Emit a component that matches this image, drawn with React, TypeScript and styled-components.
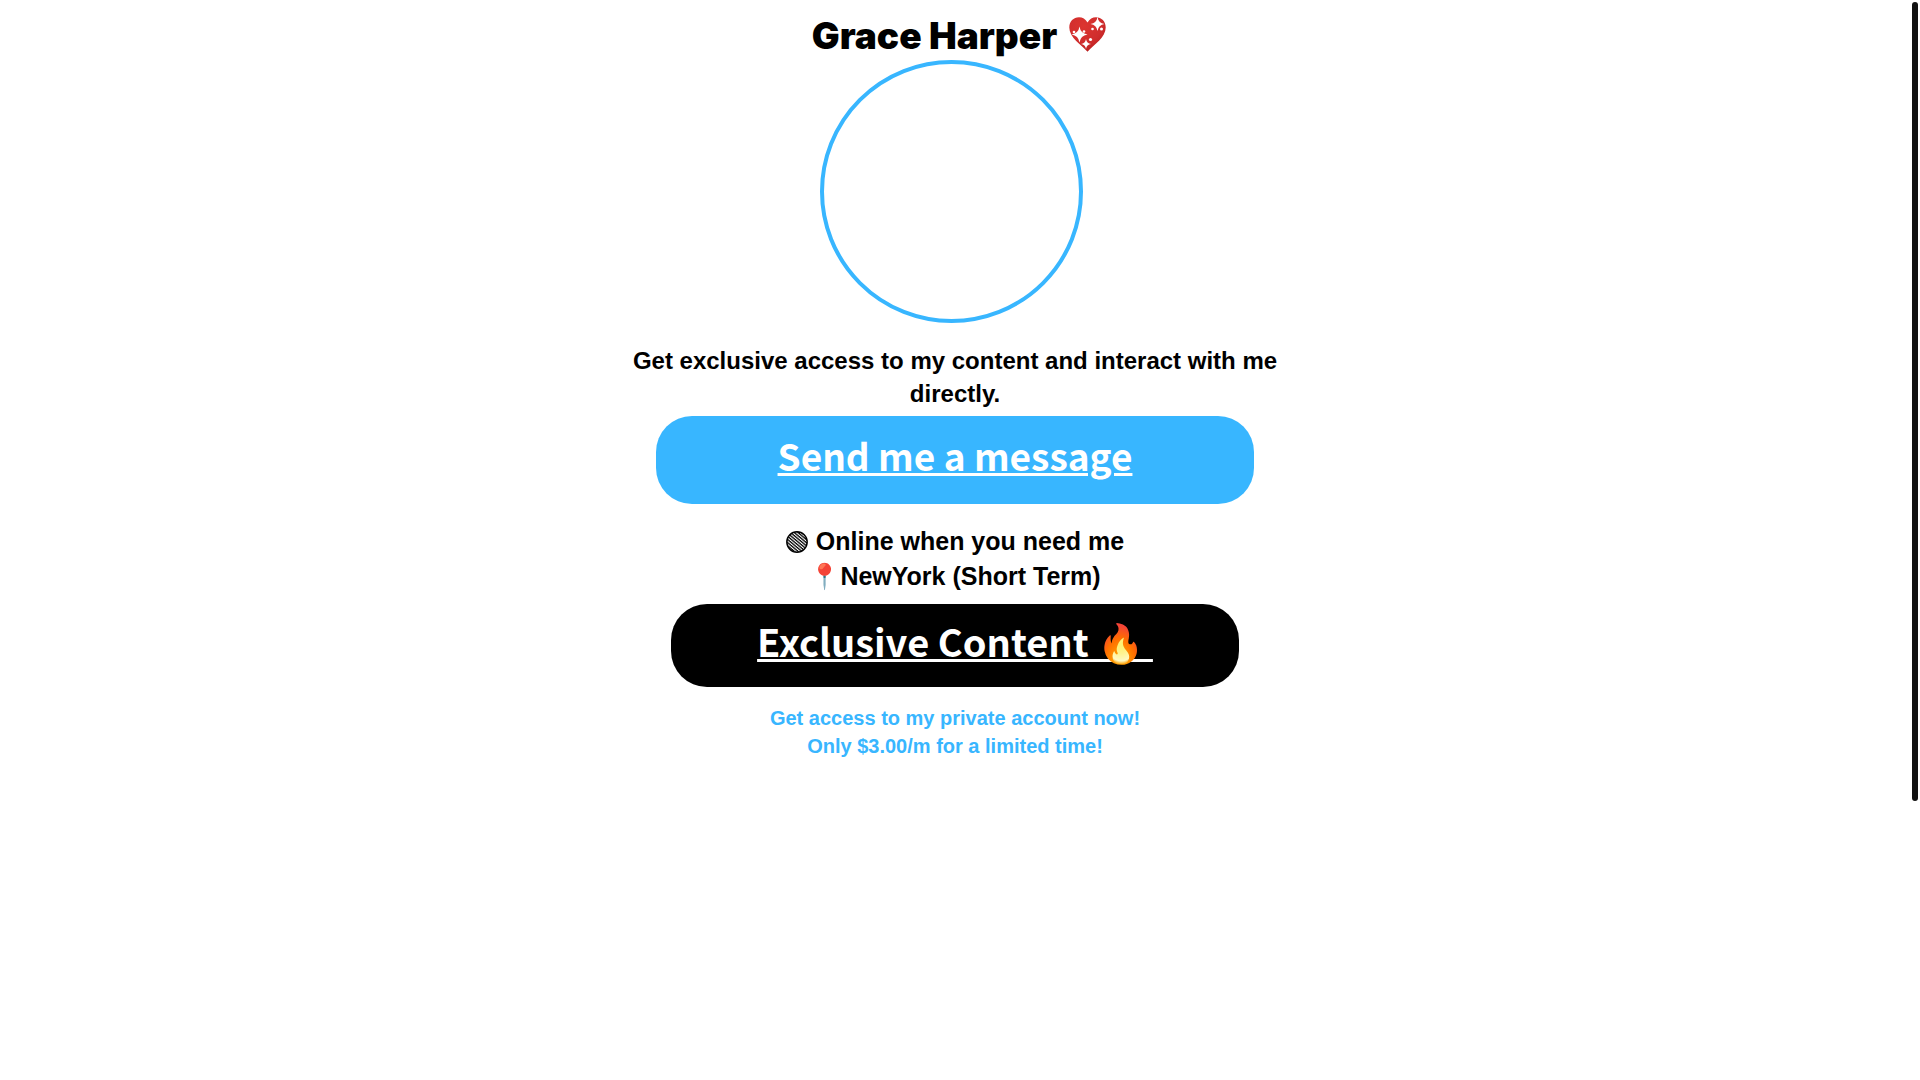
import React from "react";
import styled, { createGlobalStyle } from "styled-components";

const blue = "#38b6ff";

const GlobalStyle = createGlobalStyle`
  body {
    margin: 0;
    background: #fff;
    color: #000;
    font-family: "Liberation Sans", Arial, sans-serif;
  }
`;

const Page = styled.div`
  display: flex;
  align-items: flex-start;
  min-height: 100vh;
`;

const Profile = styled.main`
  flex: 1;
  display: flex;
  flex-direction: column;
  align-items: center;
  padding: 12px 0 40px;
`;

const Name = styled.h1`
  display: flex;
  align-items: center;
  gap: 12px;
  height: 48px;
  margin: 0;
  padding-left: 8px;
  font: 900 37px/48px Inter, "Liberation Sans", sans-serif;

  svg {
    margin-bottom: 4px;
  }
`;

const Avatar = styled.div`
  box-sizing: border-box;
  width: 263px;
  height: 263px;
  margin: 0 8px 21px 0;
  border: 4px solid ${blue};
  border-radius: 50%;
`;

const Text = styled.p<{ $size: number; $line: number; $color?: string }>`
  max-width: 670px;
  margin: 0;
  color: ${(p) => p.$color ?? "inherit"};
  font-weight: 700;
  font-size: ${(p) => p.$size}px;
  line-height: ${(p) => p.$line}px;
  text-align: center;
`;

const StatusLine = styled.span`
  display: flex;
  align-items: center;
  justify-content: center;
  gap: 8px;
`;

const Action = styled.a<{ $bg: string; $width: number; $height: number; $size: number }>`
  box-sizing: border-box;
  display: flex;
  align-items: center;
  justify-content: center;
  width: ${(p) => p.$width}px;
  max-width: 100%;
  height: ${(p) => p.$height}px;
  padding-bottom: 10px;
  border-radius: 36px;
  background: ${(p) => p.$bg};
  color: #fff;
  font: 700 ${(p) => p.$size}px/54px "Noto Sans CJK JP", "Noto Sans", sans-serif;
  text-decoration: underline;
  text-decoration-thickness: 3px;
  text-underline-offset: 2px;
  white-space: pre;
`;

const MessageAction = styled(Action)`
  margin: 6px 0 20px;
`;

const ContentAction = styled(Action)`
  margin: 10px 0 17px;
`;

const Rail = styled.div`
  position: fixed;
  top: 2px;
  right: 2px;
  width: 6px;
  height: 74vh;
  border-radius: 3px;
  background: #111;
`;

const Gutter = styled.div`
  width: 10px;
`;

const star = (x: number, y: number, r: number) => {
  const k = r * 0.13;
  return `M${x} ${y - r}Q${x + k} ${y - k} ${x + r} ${y}Q${x + k} ${y + k} ${x} ${y + r}Q${x - k} ${y + k} ${x - r} ${y}Q${x - k} ${y - k} ${x} ${y - r}Z`;
};

const SparklingHeart = () => (
  <svg width="37" height="35" viewBox="0 0 37 35" role="img" aria-label="Sparkling heart">
    <defs>
      <radialGradient id="heart" cx="0.4" cy="0.25" r="0.8">
        <stop offset="0" stopColor="#dc3530" />
        <stop offset="0.6" stopColor="#d02d2d" />
        <stop offset="1" stopColor="#b71c1c" />
      </radialGradient>
    </defs>
    <path
      fill="url(#heart)"
      d="M18.5 5.5C16.5 2 13.5 0.3 10 0.3C4.5 0.3 0.3 4.5 0.3 10.5C0.3 20.5 12 27.5 18.5 34.7C25 27.5 36.7 20.5 36.7 10.5C36.7 4.5 32.5 0.3 27 0.3C23.5 0.3 20.5 2 18.5 5.5Z"
    />
    <g fill="#fff">
      <path d={star(10.5, 17.5, 8)} />
      <path d={star(28.5, 7, 7)} />
      <path d={star(17, 27, 5)} />
      <circle cx="5" cy="15" r="1.3" />
      <circle cx="15" cy="14.5" r="1.3" />
      <circle cx="23.5" cy="12" r="1.3" />
      <circle cx="32.5" cy="12" r="1.5" />
      <circle cx="21.5" cy="22.5" r="1.6" />
    </g>
  </svg>
);

const HatchedDot = () => (
  <svg width="22" height="22" viewBox="0 0 22 22" aria-hidden="true">
    <defs>
      <pattern id="hatch" width="2.4" height="2.4" patternUnits="userSpaceOnUse" patternTransform="rotate(40)">
        <rect width="2.4" height="1.3" fill="#000" />
      </pattern>
    </defs>
    <circle cx="11" cy="11" r="10.2" fill="url(#hatch)" stroke="#000" strokeWidth="1.4" />
  </svg>
);

export default function App() {
  return (
    <>
      <GlobalStyle />
      <Page>
        <Profile>
          <Name>
            Grace Harper
            <SparklingHeart />
          </Name>
          <Avatar />
          <Text $size={24} $line={33}>
            Get exclusive access to my content and interact with me directly.
          </Text>
          <MessageAction href="#message" $bg={blue} $width={598} $height={88} $size={37}>
            Send me a message
          </MessageAction>
          <Text as="div" $size={25} $line={35}>
            <StatusLine>
              <HatchedDot />
              Online when you need me
            </StatusLine>
            📍NewYork (Short Term)
          </Text>
          <ContentAction href="#exclusive" $bg="#000" $width={568} $height={83} $size={38}>
            {"Exclusive Content 🔥\u00a0"}
          </ContentAction>
          <Text $size={20} $line={28} $color={blue}>
            Get access to my private account now!
            <br />
            Only $3.00/m for a limited time!
          </Text>
        </Profile>
        <Gutter />
      </Page>
      <Rail />
    </>
  );
}
